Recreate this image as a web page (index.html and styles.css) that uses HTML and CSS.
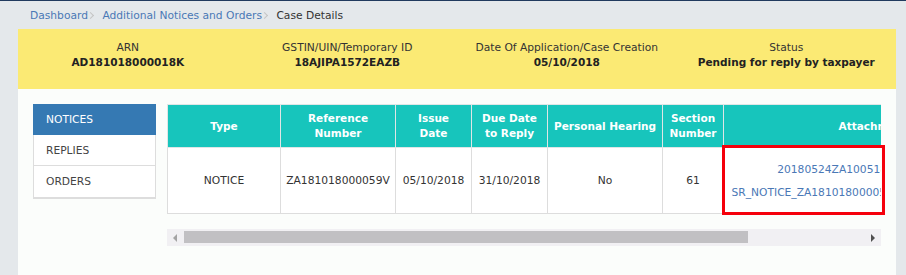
FILE: index.html
```html
<!DOCTYPE html>
<html lang="en">
<head>
    <meta charset="UTF-8">
    <meta name="viewport" content="width=device-width, initial-scale=1.0">
    <title>Case Details</title>
    <link rel="stylesheet" href="styles.css">
</head>
<body>
    <div class="breadcrumb">
        <a href="#">Dashboard</a><span class="sep"></span>
        <a href="#">Additional Notices and Orders</a><span class="sep"></span>
        <span class="current">Case Details</span>
    </div>

    <div class="page">
        <div class="case-info">
            <div class="info-item">
                <div class="info-label">ARN</div>
                <div class="info-value">AD181018000018K</div>
            </div>
            <div class="info-item">
                <div class="info-label">GSTIN/UIN/Temporary ID</div>
                <div class="info-value">18AJIPA1572EAZB</div>
            </div>
            <div class="info-item">
                <div class="info-label">Date Of Application/Case Creation</div>
                <div class="info-value">05/10/2018</div>
            </div>
            <div class="info-item">
                <div class="info-label">Status</div>
                <div class="info-value">Pending for reply by taxpayer</div>
            </div>
        </div>

        <div class="content">
            <ul class="side-nav">
                <li class="active">NOTICES</li>
                <li>REPLIES</li>
                <li>ORDERS</li>
            </ul>

            <div class="table-area">
                <div class="table-scroll">
                    <table class="notice-table">
                        <colgroup>
                            <col class="c-type">
                            <col class="c-ref">
                            <col class="c-date">
                            <col class="c-date">
                            <col class="c-hearing">
                            <col class="c-section">
                            <col class="c-attach">
                        </colgroup>
                        <thead>
                            <tr>
                                <th>Type</th>
                                <th>Reference<br>Number</th>
                                <th>Issue<br>Date</th>
                                <th>Due Date<br>to Reply</th>
                                <th>Personal Hearing</th>
                                <th>Section<br>Number</th>
                                <th>Attachments</th>
                            </tr>
                        </thead>
                        <tbody>
                            <tr>
                                <td>NOTICE</td>
                                <td>ZA181018000059V</td>
                                <td>05/10/2018</td>
                                <td>31/10/2018</td>
                                <td>No</td>
                                <td>61</td>
                                <td>
                                    <a class="file-link" href="#">20180524ZA1005180000110001.pdf</a>
                                    <a class="file-link" href="#">SR_NOTICE_ZA181018000059V_05102018101520.pdf</a>
                                </td>
                            </tr>
                        </tbody>
                    </table>
                </div>
                <div class="scrollbar">
                    <span class="arrow-left"></span>
                    <span class="thumb"></span>
                    <span class="arrow-right"></span>
                </div>
                <div class="highlight"></div>
            </div>
        </div>
    </div>
</body>
</html>
```

FILE: styles.css
```css
body { margin: 0; background: #e4e8eb; border-top: 1px solid #203a5e; font-family: "DejaVu Sans", Verdana, sans-serif; font-size: 10.7px; color: #333; }
a { color: #4a78b6; text-decoration: none; }

.breadcrumb { height: 28px; line-height: 30px; padding-left: 30px; white-space: nowrap; }
.breadcrumb .sep { display: inline-block; width: 4px; height: 4px; border-top: 1px solid #c4c4c4; border-right: 1px solid #c4c4c4; transform: rotate(45deg); margin: 0 6px 1px 0; }
.breadcrumb .current { color: #333; }

.page { margin: 0 10px 0 18px; }

.case-info { background: #fbea74; height: 60px; box-sizing: border-box; padding-top: 11px; display: grid; grid-template-columns: repeat(4, 1fr); text-align: center; line-height: 15px; }
.info-label { color: #333; }
.info-value { font-weight: bold; color: #222; font-size: 10.5px; }

.content { background: #fbfdfb; display: flex; align-items: flex-start; gap: 11px; padding: 15px 0 0 15px; min-height: 171px; }

.side-nav { list-style: none; margin: 0; padding: 0; width: 123px; border: 1px solid #ddd; border-top: none; box-sizing: border-box; }
.side-nav li { height: 30px; line-height: 31px; padding-left: 12px; border-bottom: 1px solid #ddd; background: #fff; color: #444; }
.side-nav li.active { background: #3579b3; color: #fff; height: 31px; line-height: 32px; border-bottom: none; margin: 0 -1px; padding-left: 13px; }
.side-nav li:last-child { height: 31px; }

.table-area { position: relative; width: 714px; }
.table-scroll { overflow: hidden; }

.notice-table { border-collapse: collapse; table-layout: fixed; width: 862px; }
.c-type { width: 113px; }
.c-ref { width: 115px; }
.c-date { width: 76px; }
.c-hearing { width: 115px; }
.c-section { width: 61px; }
.c-attach { width: 306px; }
.notice-table th, .notice-table td { border: 1px solid #ddd; padding: 0 4px; text-align: center; white-space: nowrap; overflow: hidden; }
.notice-table th { background: #17c5bc; color: #fff; font-weight: bold; font-size: 10.5px; height: 42px; line-height: 15px; border-color: #dfe6e6; }
.notice-table td { background: #fff; height: 65px; color: #333; }
.file-link { display: block; line-height: 15px; }
.file-link + .file-link { margin-top: 8px; }

.scrollbar { position: relative; margin-top: 15px; height: 17px; background: #f1f0f3; }
.thumb { position: absolute; left: 17px; top: 2px; width: 564px; height: 12px; background: #c1c0c3; }
.arrow-left, .arrow-right { position: absolute; top: 5px; width: 0; height: 0; border-top: 4px solid transparent; border-bottom: 4px solid transparent; }
.arrow-left { left: 6px; border-right: 4px solid #a3a3a3; }
.arrow-right { right: 6px; border-left: 4px solid #505050; }

.highlight { position: absolute; left: 555px; top: 41px; width: 157px; height: 64px; border: 3px solid #f5000b; }
```
